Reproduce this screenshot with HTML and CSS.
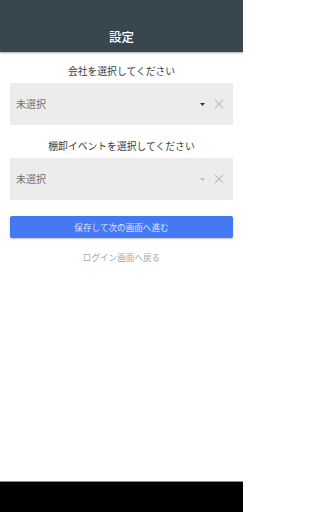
FILE: index.html
```html
<!DOCTYPE html>
<html lang="ja">
<head>
<meta charset="utf-8">
<title>設定</title>
<link rel="stylesheet" href="styles.css">
</head>
<body>
<div class="screen">
  <header class="appbar"><span class="title">設定</span></header>
  <main class="content">
    <div class="label">会社を選択してください</div>
    <div class="select">
      <span class="value">未選択</span>
      <span class="icons">
        <svg class="arrow" width="5" height="3" viewBox="0 0 5 3"><path d="M0 0H5L2.5 3Z" fill="#333"/></svg>
        <svg class="clear" width="10" height="10" viewBox="0 0 10 10"><path d="M1 1L9 9M9 1L1 9" stroke="#c0c0c0" stroke-width="1.1"/></svg>
      </span>
    </div>
    <div class="label">棚卸イベントを選択してください</div>
    <div class="select">
      <span class="value">未選択</span>
      <span class="icons">
        <svg class="arrow" width="5" height="3" viewBox="0 0 5 3"><path d="M0 0H5L2.5 3Z" fill="#c4c4c4"/></svg>
        <svg class="clear" width="10" height="10" viewBox="0 0 10 10"><path d="M1 1L9 9M9 1L1 9" stroke="#c0c0c0" stroke-width="1.1"/></svg>
      </span>
    </div>
    <button class="primary">保存して次の画面へ進む</button>
    <div class="back">ログイン画面へ戻る</div>
  </main>
  <footer class="navbar"></footer>
</div>
</body>
</html>
```

FILE: styles.css
```css
html, body {
  margin: 0;
  padding: 0;
  background: #ffffff;
}
body {
  font-family: "Noto Sans CJK JP", "Noto Sans", sans-serif;
}
.screen {
  width: 243px;
  height: 512px;
  display: flex;
  flex-direction: column;
  overflow: hidden;
}
.appbar {
  height: 52px;
  background: #38474f;
  box-shadow: 0 1px 2px rgba(0,0,0,0.35);
  display: flex;
  align-items: flex-end;
  justify-content: center;
  box-sizing: border-box;
  padding-bottom: 7px;
  position: relative;
  z-index: 1;
}
.title {
  color: #ffffff;
  font-size: 12.5px;
  line-height: 16px;
  font-weight: 500;
}
.content {
  flex: 1;
  display: flex;
  flex-direction: column;
  padding: 12px 10px 0;
}
.label {
  text-align: center;
  font-size: 9.8px;
  line-height: 14px;
  color: #3a3a3a;
  margin-bottom: 5px;
}
.select {
  height: 42px;
  background: #ececec;
  display: flex;
  align-items: center;
  justify-content: space-between;
  padding: 0 9px 0 6px;
  margin-bottom: 14px;
}
.value {
  font-size: 10px;
  color: #707070;
  line-height: 14px;
}
.icons {
  display: flex;
  align-items: center;
  gap: 9px;
}
.arrow, .clear {
  display: block;
}
.primary {
  margin-top: 2px;
  height: 22px;
  border: none;
  border-radius: 2px;
  background: #4479f3;
  color: #dbe5fd;
  font-family: inherit;
  font-size: 8.6px;
  padding: 0;
  box-shadow: 0 1px 2px rgba(0,0,0,0.25);
}
.back {
  margin-top: 13px;
  text-align: center;
  font-size: 8.6px;
  line-height: 12px;
  color: #a8a8a8;
}
.navbar {
  height: 30px;
  background: #000000;
  border-top: 1px solid #8a8a8a;
}
```
